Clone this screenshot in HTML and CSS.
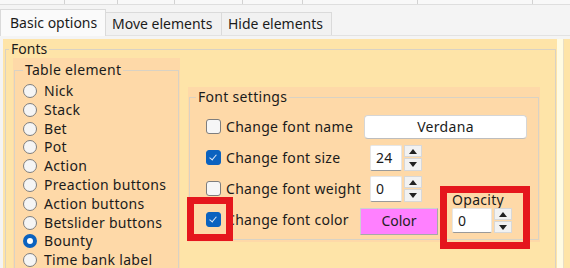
FILE: index.html
```html
<!DOCTYPE html>
<html lang="en">
<head>
  <meta charset="UTF-8">
  <title>Table layout options</title>
  <link rel="stylesheet" href="styles.css">
</head>
<body>
  <div class="prev-tabs">
    <span style="width:65px"></span>
    <span style="width:53px"></span>
    <span style="width:57px"></span>
    <span style="width:68px"></span>
    <span style="width:60px"></span>
    <span style="width:115px"></span>
    <span style="width:115px"></span>
  </div>

  <div class="tabbar">
    <div class="tab active">Basic options</div>
    <div class="tab">Move elements</div>
    <div class="tab">Hide elements</div>
  </div>

  <div class="panel">
    <fieldset class="group fonts">
      <legend>Fonts</legend>
      <div class="fonts-body">

        <div class="box table-box">
          <fieldset class="group">
            <legend>Table element</legend>
            <ul class="radios">
              <li><span class="radio"></span>Nick</li>
              <li><span class="radio"></span>Stack</li>
              <li><span class="radio"></span>Bet</li>
              <li><span class="radio"></span>Pot</li>
              <li><span class="radio"></span>Action</li>
              <li><span class="radio"></span>Preaction buttons</li>
              <li><span class="radio"></span>Action buttons</li>
              <li><span class="radio"></span>Betslider buttons</li>
              <li><span class="radio on"></span>Bounty</li>
              <li><span class="radio"></span>Time bank label</li>
            </ul>
          </fieldset>
        </div>

        <div class="box settings-box">
          <fieldset class="group">
            <legend>Font settings</legend>
            <div class="settings">
              <label class="check-row"><span class="check"></span>Change font name</label>
              <div class="text-field">Verdana</div>

              <label class="check-row"><span class="check on"></span>Change font size</label>
              <div class="spin spin-small">
                <div class="spin-value">24</div>
                <div class="spin-btns"><span class="up"></span><span class="down"></span></div>
              </div>

              <label class="check-row"><span class="check"></span>Change font weight</label>
              <div class="spin spin-small">
                <div class="spin-value">0</div>
                <div class="spin-btns"><span class="up"></span><span class="down"></span></div>
              </div>

              <div class="opacity">
                <div class="opacity-label">Opacity</div>
                <div class="spin spin-wide">
                  <div class="spin-value">0</div>
                  <div class="spin-btns"><span class="up"></span><span class="down"></span></div>
                </div>
              </div>

              <label class="check-row"><span class="check on"></span>Change font color</label>
              <button class="color-btn">Color</button>
            </div>
          </fieldset>
        </div>

      </div>
    </fieldset>
    <div class="stripe"></div>
  </div>

  <div class="mark mark-check"></div>
  <div class="mark mark-opacity"></div>
</body>
</html>
```

FILE: styles.css
```css
body {
  margin: 0;
  height: 268px;
  overflow: hidden;
  background: #f4f4f4;
  color: #1b1b1b;
  font-family: 'Noto Sans', sans-serif;
  font-size: 14px;
  line-height: 16px;
  position: relative;
}

/* bottom edge of the tab row above, cut off */
.prev-tabs {
  display: flex;
  height: 4px;
  background: #f8f8f8;
  border-bottom: 1px solid #dedede;
}
.prev-tabs span {
  border-right: 1px solid #d2d2d2;
  box-sizing: border-box;
}

.tabbar {
  display: flex;
  align-items: flex-end;
  height: 30px;
  border-bottom: 1px solid #e2e2e2;
}
.tab {
  box-sizing: border-box;
  height: 23px;
  padding: 3px 6px 0;
  background: #f1f1f1;
  border: 1px solid #dadada;
  border-bottom: none;
  margin-left: -1px;
}
.tab.active {
  height: 27px;
  width: 106px;
  margin-left: 0;
  margin-bottom: -1px;
  padding: 5px 0 0 9px;
  background: #fafafa;
  position: relative;
}
.tab:nth-child(2) { width: 117px; }
.tab:nth-child(3) { width: 111px; }

.panel {
  display: flex;
  margin: 3px 0 0 3px;
  height: 229px;
  background: #fee4a8;
}

.group {
  margin: 0;
  padding: 0;
  border: 1px solid #d9d2c4;
  min-width: 0;
}
.group legend {
  padding: 0 2px;
  line-height: 16px;
}

.fonts {
  width: 551px;
  box-sizing: border-box;
  margin: 2px 0 0 2px;
  border-bottom: none;
}
.fonts legend { margin-left: 3px; }

.stripe {
  width: 6px;
  margin-left: 1px;
  background: #fffbe3;
  border-right: 1px solid #e9dfc6;
}

.fonts-body {
  display: flex;
  align-items: flex-start;
  letter-spacing: 0.3px;
}

.box {
  background: #fed9a8;
  box-sizing: border-box;
}

.table-box {
  width: 167px;
  height: 220px;
  margin: 1px 0 0 7px;
  padding: 4px 1px 0;
}
.table-box .group { height: 240px; border-bottom: none; }
.table-box legend { margin-left: 8px; }

.radios {
  list-style: none;
  margin: 0;
  padding: 3.6px 0 0 8px;
}
.radios li {
  display: flex;
  align-items: center;
  gap: 7px;
  height: 18.8px;
  white-space: nowrap;
}
.radio {
  box-sizing: border-box;
  width: 14px;
  height: 14px;
  border-radius: 50%;
  border: 1px solid #7e7e7e;
  background: #f5f5f5;
  flex: none;
}
.radio.on {
  border: 4.5px solid #0b62bf;
  background: #fff;
}

.settings-box {
  width: 352px;
  margin: 30px 0 0 8px;
  padding: 2px 1px;
}
.settings-box legend { margin-left: 6px; }

.settings {
  display: grid;
  grid-template-columns: 154px 92px 75px;
  grid-template-rows: repeat(4, 31px);
  align-items: center;
  padding: 6px 0 4px 16px;
}

.check-row {
  display: flex;
  align-items: center;
  gap: 5px;
  grid-column: 1;
  white-space: nowrap;
}
.check {
  box-sizing: border-box;
  width: 15px;
  height: 15px;
  border-radius: 3px;
  border: 1px solid #7e7e7e;
  background: #f6f6f6;
  flex: none;
  position: relative;
}
.check.on {
  border-color: #0b62bf;
  background: #0b62bf;
}
.check.on::after {
  content: '';
  position: absolute;
  left: 4px;
  top: 2px;
  width: 3px;
  height: 6px;
  border: solid #dfe9f7;
  border-width: 0 1.5px 1.5px 0;
  transform: rotate(40deg);
}

.text-field {
  grid-column: 2 / 4;
  margin-left: 4px;
  width: 163px;
  height: 24px;
  box-sizing: border-box;
  border: 1px solid #d6d6d6;
  border-bottom-color: #bdbdbd;
  border-radius: 4px;
  background: #fff;
  text-align: center;
  line-height: 22px;
}

.spin {
  display: flex;
  gap: 2px;
}
.spin-small { margin-left: 10px; }
.spin-value {
  box-sizing: border-box;
  height: 26px;
  padding: 4px 0 0 5px;
  background: #fff;
  border: 1px solid #e6e6e6;
  border-bottom: 1px solid #9a9a9a;
  border-radius: 2px;
}
.spin-small .spin-value { width: 32px; }
.spin-wide .spin-value { width: 40px; height: 25px; }
.spin-btns {
  display: flex;
  flex-direction: column;
  gap: 1px;
  width: 18px;
}
.spin-btns span {
  flex: 1;
  background: #f2f2f2;
  border: 1px solid #d8d8d8;
  position: relative;
}
.spin-btns span::after {
  content: '';
  position: absolute;
  left: 4px;
  top: 3px;
  border-left: 4px solid transparent;
  border-right: 4px solid transparent;
}
.spin-btns .up::after { border-bottom: 5px solid #222; }
.spin-btns .down::after { border-top: 5px solid #222; }

.opacity {
  grid-column: 3;
  grid-row: 3 / 5;
  align-self: end;
  margin-bottom: 2px;
}
.opacity-label {
  height: 16px;
  padding-top: 2px;
}

.color-btn {
  grid-column: 2;
  grid-row: 4;
  width: 78px;
  height: 27px;
  margin: 3px 0 0;
  padding: 0;
  font: inherit;
  color: #222;
  background: #ff80ff;
  border: 1px solid #cfcfcf;
  border-right-color: #a8a8a8;
  border-bottom-color: #a8a8a8;
}

/* red annotation frames over the screenshot */
.mark {
  position: absolute;
  box-sizing: border-box;
  border: 7px solid #e5161d;
}
.mark-check {
  left: 187px;
  top: 197px;
  width: 46px;
  height: 44px;
}
.mark-opacity {
  left: 440px;
  top: 186px;
  width: 90px;
  height: 63px;
}
```
